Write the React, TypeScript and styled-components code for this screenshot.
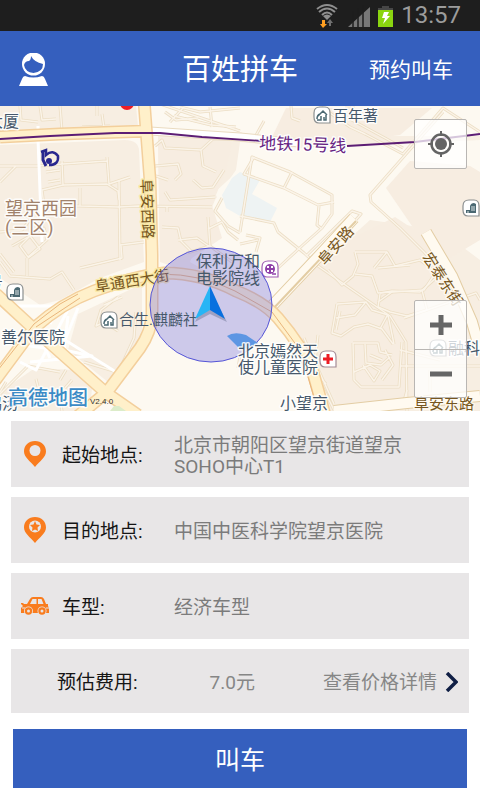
import React from "react";
import styled, { createGlobalStyle } from "styled-components";

const SANS = `Roboto, "Noto Sans CJK SC", sans-serif`;
const BLUE = "#355fbe";
const ORANGE = "#f97c1e";
const ROW_GREY = "#e8e6e7";

const GlobalStyle = createGlobalStyle`
  *, *::before, *::after { box-sizing: border-box; }
  body { margin: 0; background: #fff; font-family: ${SANS}; color: #151515; }
  button { font-family: inherit; border: 0; margin: 0; padding: 0; cursor: pointer; }
  svg { display: block; }
`;

const Page = styled.div`
  display: flex;
  flex-direction: column;
  min-height: 100vh;
`;

const StatusBar = styled.div`
  display: flex;
  align-items: center;
  justify-content: flex-end;
  height: 31px;
  padding-right: 19px;
  background: #1e1e1e;
  color: #9c9c9c;
`;

const StatusIcons = styled.div`
  display: flex;
  gap: 7px;
  margin-right: 7px;
`;

const Clock = styled.time`
  font-size: 24px;
  line-height: 31px;
`;

const Header = styled.header`
  display: grid;
  grid-template-columns: 1fr auto 1fr;
  align-items: center;
  height: 75px;
  padding: 2px 27px 0 19px;
  background: ${BLUE};
  color: #fff;
`;

const ProfileButton = styled.button`
  justify-self: start;
  background: none;
`;

const Title = styled.h1`
  margin: 0 0 0 8px;
  font-size: 29px;
  font-weight: 400;
  line-height: 40px;
`;

const BookLink = styled.a`
  justify-self: end;
  color: #fff;
  font-size: 21px;
  line-height: 32px;
  text-decoration: none;
`;

const MapPanel = styled.section`
  position: relative;
  overflow: hidden;
`;

const MapDrawing = styled.svg`
  width: 100%;
  height: auto;
`;

const LocateButton = styled.button`
  position: absolute;
  top: 13px;
  right: 13px;
  display: grid;
  place-items: center;
  width: 53px;
  height: 50px;
  border: 1px solid #b9b6b3;
  border-radius: 2px;
  background: rgba(255, 255, 255, 0.75);
`;

const ZoomControls = styled.div`
  position: absolute;
  right: 13px;
  bottom: 13px;
  display: flex;
  flex-direction: column;
  width: 53px;
  border: 1px solid #b9b6b3;
  border-radius: 2px;
  background: rgba(255, 255, 255, 0.75);
`;

const ZoomButton = styled.button`
  display: grid;
  place-items: center;
  height: 48px;
  background: none;
  & + & { border-top: 1px solid #b9b6b3; }
`;

const Order = styled.main`
  display: flex;
  flex-direction: column;
  gap: 10px;
  padding: 10px 11px 12px;
`;

const FieldRow = styled.button`
  display: grid;
  grid-template-columns: 28px 112px 1fr;
  align-items: center;
  min-height: 66px;
  padding: 0 60px 0 10px;
  background: ${ROW_GREY};
  text-align: left;
`;

const FieldIcon = styled.span`
  display: grid;
  place-items: center;
`;

const FieldLabel = styled.span`
  padding: 3px 0 0 13px;
  color: #151515;
  font-size: 19px;
  line-height: 21px;
`;

const FieldValue = styled(FieldLabel)`
  color: #7b7b7b;
`;

const FareRow = styled.div`
  display: flex;
  align-items: center;
  justify-content: space-between;
  min-height: 64px;
  padding: 2px 11px 0 46px;
  background: ${ROW_GREY};
  font-size: 19px;
  line-height: 21px;
`;

const FareLabel = styled.span`
  color: #151515;
`;

const FareAmount = styled.span`
  padding-left: 4px;
  color: #868686;
`;

const FareLink = styled.a`
  display: flex;
  align-items: center;
  gap: 8px;
  color: #868686;
  text-decoration: none;
`;

const CallButton = styled.button`
  height: 59px;
  margin: 6px 2px 0;
  padding-top: 4px;
  background: ${BLUE};
  color: #fff;
  font-size: 25px;
  line-height: 32px;
`;

const blocks = [
  "M0 106H136L138 126L0 131Z",
  "M0 145L125 140Q138 140 139 150L144 262L100 278L60 300L40 305L0 278Z",
  "M158 136H480V411H330L300 345L276 312L240 290L160 262Z",
  "M68 350L78 314L142 284V330Q140 345 120 372L108 382Z",
  "M0 392L35 368L75 370L92 388L90 411H0Z",
];

const openGround = [
  "M238 106L286 106L274 137L240 140Z",
  "M240 142L300 148L480 140V260L440 230L370 220L270 310L240 290L190 262L215 200L236 170Z",
  "M318 411L272 316L160 282L155 326L118 372L108 392L138 411Z",
  "M215 192L237 172L276 210L268 222L238 216L222 212Z",
];

const tintedBlocks = [
  "M286 108L272 137L350 142L400 135L432 108Z",
  "M386 188L410 161L470 166L480 172V240L450 258L412 226Z",
  "M285 313L318 255L395 217L430 240L460 300L470 392L340 406L318 360Z",
  "M158 138L232 142L226 170L212 205L222 238L186 262L160 262Z",
];

const whiteStreets = [
  "M38 126V139M38 139L42 242",
  "M12 315L42 325M16 306L70 306L36 370L20 362",
  "M68 316L64 350L92 356L30 362",
  "M78 308L65 340L116 372",
  "M50 324L60 306M22 345L60 350M36 331L50 358",
];

const lanes = [
  "M20 106L21 120L38 122M40 106L42 120L56 119M60 106L62 131M97 106V116M102 114L104 128M82 127L110 126",
  "M0 166H38L63 164L107 161M16 166L0 182M107 157L109 184L130 177M62 161L63 185L42 190M46 172L60 170M48 182L60 180",
  "M63 185L107 184L118 191L119 200M80 188V206L119 207M42 190L44 206L80 206M119 180L120 260",
  "M119 207L138 206L212 207M120 245L144 242M121 245L122 258L80 268",
  "M12 246L44 228L47 240L28 257L20 246L30 236L40 249L28 258",
  "M0 232L22 230L30 220M27 258V276M0 262L10 276L50 279L62 272L74 290M0 254L14 272",
  "M155 146L162 140L165 148L201 150L213 139H240M201 150L203 166L216 172M155 166L178 164L181 174L175 180M156 176L168 180",
  "M193 180L202 188L213 187L224 170M165 192L170 200L215 197M167 206V212M240 131L160 104M170 122L184 107",
  "M210 107L212 127M174 116L211 125L236 127M180 107L200 112L240 108M165 112L176 120L198 118",
  "M162 227L178 228L181 241L192 252M208 217L210 247L197 238L178 240M208 229L222 222L228 232L238 240M187 253L210 246L232 262",
  "M222 198L215 211L228 226L240 233",
  "M118 297L101 310L96 326L104 322L118 331M104 305L122 297M136 312L134 338L118 373M84 362L117 372",
  "M0 394L28 366L60 372M36 379L40 394M66 370L60 380M58 396L72 380M6 382L0 392M28 394L38 400M60 398L62 411",
  "M240 232L252 157L290 172L332 195V214L322 228L304 244L278 268",
  "M264 121L255 137L240 134M254 157L244 174L284 188L292 172M284 188L318 205L334 202M319 206L317 225L322 229",
  "M320 106L350 127L365 134L403 154L443 108L480 132M443 112L370 195L371 202L400 228L424 252L440 270L450 286",
  "M403 148L385 138L348 118",
  "M240 216L274 223L278 232L304 253L318 266L390 316L406 342L407 411M240 244L258 240M246 235L260 238L256 252",
  "M345 106L355 106M325 255L354 222L361 214L352 211L306 256M355 252L358 264L353 276L342 285L328 270M355 252L387 252L395 266L420 260L436 272L424 290L378 293L372 276L355 274",
  "M378 268L410 265M387 252L374 268M380 293L392 291L420 292L436 278M380 294L378 307L390 312L407 316L427 310L422 290M392 292L378 302",
  "M337 304L366 302L372 310L388 315L394 344M337 304L332 333L341 336L354 327L368 324L382 329L393 344M340 311L336 330M365 303L355 315L336 318M388 314L380 329",
  "M353 343H378L380 352L392 355M353 343L354 380L361 387H399L402 342M365 344L366 363L381 365L390 357M354 372L370 365L380 371L374 381L363 365M370 355L382 360M385 350L393 365L382 380",
  "M318 335L314 370L334 410M314 370L326 384M304 338L334 404M400 366H480M400 350L440 360M404 318L476 293L480 300M430 370L430 392",
  "M291 106L292 118L300 121M240 356L238 368M403 405L407 390",
];

const SIDE_ROADS = "M268 310L318 257L354 218M426 232L452 276L472 322L480 350M334 411L407 403L480 396";
const MAIN_ROADS =
  "M0 137L60 134L148 131M144 100L150 180L152 255V315Q151 332 140 348L107 392L78 416M-6 292L33 328L105 392L138 415M-6 382L34 328Q62 303 94 291Q135 276 164 273Q202 273 236 291Q264 302 278 318Q302 346 313 372L325 415";

type TagKind = "home" | "building" | "film" | "hospital";

const tagBorder: Record<TagKind, string> = {
  home: "#8b8f90",
  building: "#8b8f90",
  film: "#a05fb4",
  hospital: "#a48c96",
};

function PlaceTag({ x, y, kind }: { x: number; y: number; kind: TagKind }) {
  return (
    <g transform={`translate(${x} ${y})`}>
      <path
        d="M-2-8H3Q8-8 8-2V8H-3Q-8 8-8 2V-2Q-8-8-2-8Z"
        fill="#fff"
        stroke={tagBorder[kind]}
        strokeWidth="1.2"
      />
      {kind === "home" && (
        <path d="M-5 4Q-5 0-2-1M-4 1L1-4L5 0M-5 5H-1V1M4 0V5H2V2" fill="none" stroke="#4a6872" strokeWidth="1.5" />
      )}
      {kind === "building" && (
        <g>
          <path d="M-5 5V2H-1V-2Q0-5 3-5L5-4V5Z" fill="#4a6872" />
          <path d="M1-2V3M3-2V3M-4 4H-2" stroke="#dfe6e8" />
        </g>
      )}
      {kind === "film" && (
        <g>
          <circle r="5" fill="#8f3fa8" />
          <path d="M-3-2H-1M1-2H3M-3 2H-1M1 2H3" stroke="#fff" strokeWidth="2" />
          <path d="M2 5H6" stroke="#8f3fa8" strokeWidth="1.5" />
        </g>
      )}
      {kind === "hospital" && <path d="M0-5V5M-5 0H5" stroke="#ec1c24" strokeWidth="3" />}
    </g>
  );
}

const PoiText = styled.text<{ $bare?: boolean; $size?: number }>`
  font-family: ${SANS};
  font-size: ${(p) => p.$size ?? 16}px;
  fill: #46586b;
  stroke: #fff;
  stroke-width: 3px;
  stroke-opacity: ${(p) => (p.$bare ? 0 : 0.85)};
  stroke-linejoin: round;
  paint-order: stroke;
`;

const StreetText = styled(PoiText)<{ $plain?: boolean }>`
  font-size: 15px;
  fill: #765620;
  stroke: ${(p) => (p.$plain ? "#fffaf0" : "#f9e8a2")};
`;

const MetroText = styled(PoiText)`
  font-size: 17px;
  fill: #672483;
`;

const AreaText = styled(PoiText)`
  fill: #a1826c;
  font-size: 18px;
`;

const BrandText = styled(PoiText)`
  fill: #3b8bc6;
  font-size: 20px;
  font-weight: 500;
`;

function CityMap() {
  return (
    <MapDrawing viewBox="0 106 480 305" role="img" aria-label="望京地图">
      <rect y="106" width="480" height="305" fill="#fdf9f1" />
      {blocks.map((d) => <path key={d} d={d} fill="#f7eee2" />)}
      {openGround.map((d) => <path key={d} d={d} fill="#fdf9f1" />)}
      {tintedBlocks.map((d) => <path key={d} d={d} fill="#f7ede1" />)}
      <path d="M240 172L260 180L252 194L277 208L270 222L240 216L226 208L222 195L232 178Z" fill="#eef3f3" />
      <g fill="none" strokeLinejoin="round">
        {lanes.map((d) => <path key={d} d={d} stroke="#ecdec5" strokeWidth="3" />)}
        {lanes.map((d) => <path key={d} d={d} stroke="#fbf4e9" strokeWidth="1.4" />)}
        {whiteStreets.map((d) => <path key={d} d={d} stroke="#fff" strokeWidth="3" />)}
        <path d={SIDE_ROADS} stroke="#e3cda4" strokeWidth="12" />
        <path d={SIDE_ROADS} stroke="#fffaf0" strokeWidth="10" />
        <path d="M272 310L356 221" stroke="#e3cda4" strokeWidth="2" />
        <path d="M150 131L240 137L300 143" stroke="#eadbc0" strokeWidth="9" />
        <path d="M150 131L240 137L300 143" stroke="#fff" strokeWidth="7" />
        <path d={MAIN_ROADS} stroke="#f3cf9c" strokeWidth="13" />
        <path d={MAIN_ROADS} stroke="#fff0ca" strokeWidth="10" />
        <path d="M-2 370L34 324L60 304L78 294M36 327L80 298M160 274Q202 274 235 291L272 312L300 350L318 411" stroke="#eab67c" />
        <path d="M0 139L50 136L115 133H160L202 137L262 141M347 146L415 142L480 134" stroke="#5c1d74" strokeWidth="1.8" />
      </g>
      <path d="M110 411L114 406H119L126 411Z" fill="#dcecc9" />

      <circle cx="127" cy="103" r="7" fill="#ee1c25" />
      <path d="M41 152L46 150V155Q53 149 58 156Q59 165 49 165" fill="none" stroke="#29278e" strokeWidth="2.5" />
      <path d="M43 152V160L46 166" fill="none" stroke="#29278e" strokeWidth="3" />
      <circle cx="49" cy="161" r="3" fill="#29278e" />

      <PoiText x="-13" y="127">大厦</PoiText>
      <PlaceTag x={322} y={115} kind="home" />
      <PoiText x="333" y="121" $size={15}>百年著</PoiText>
      <AreaText x="5" y="215">望京西园</AreaText>
      <AreaText x="5" y="234">(三区)</AreaText>
      <StreetText transform="translate(141 179) rotate(88)">阜安西路</StreetText>
      <StreetText $plain transform="translate(325 266) rotate(-49)">阜安路</StreetText>
      <StreetText $plain transform="translate(422 257) rotate(57)">宏泰东街</StreetText>
      <StreetText transform="translate(96 292) rotate(-9)">阜通西大街</StreetText>
      <StreetText $plain x="414" y="409">阜安东路</StreetText>
      <MetroText transform="translate(259 149) rotate(2)">地铁15号线</MetroText>
      <PlaceTag x={471} y={208} kind="building" />
      <PlaceTag x={15} y={292} kind="building" />
      <PoiText x="-13" y="288">号</PoiText>
      <PoiText x="1" y="343">善尔医院</PoiText>
      <PlaceTag x={109} y={320} kind="home" />
      <PlaceTag x={270} y={269} kind="film" />
      <PlaceTag x={328} y={359} kind="hospital" />
      <PoiText x="280" y="409">小望京</PoiText>
      <PlaceTag x={438} y={348} kind="home" />
      <PoiText x="448" y="354">融科橄榄城</PoiText>

      <ellipse cx="211" cy="305" rx="61" ry="57" fill="#6a63dc" fillOpacity="0.32" stroke="#5555d7" />
      <path d="M227 336Q234 331 246 335L258 343L250 349L239 348Z" fill="#5d96e3" />
      <PoiText $bare $size={15} x="119" y="325">合生.麒麟社</PoiText>
      <PoiText $bare x="196" y="267">保利万和</PoiText>
      <PoiText $bare x="196" y="284">电影院线</PoiText>
      <PoiText x="238" y="357">北京嫣然天</PoiText>
      <PoiText x="238" y="373">使儿童医院</PoiText>
      <path d="M210 290L227 322L210 314L195 322Z" fill="#4b5579" opacity="0.35" />
      <path d="M210 286L195 319L210 310Z" fill="#27b5f5" />
      <path d="M210 286L225 319L210 310Z" fill="#0870df" />

      <PoiText x="-14" y="409">鸿汤</PoiText>
      <BrandText x="8" y="405">高德地图</BrandText>
      <text x="90" y="404" fontFamily="Liberation Sans, sans-serif" fontSize="8" fill="#333">V2.4.0</text>
    </MapDrawing>
  );
}

function SignalIcons() {
  return (
    <StatusIcons>
      <svg width="24" height="25" viewBox="0 0 24 25" aria-label="Wi-Fi">
        <g fill="none" stroke="#8f8f8f" strokeWidth="2">
          <path d="M2 6Q12-2 22 6M4 9Q12 2 20 9M7 12Q12 7 17 12" />
        </g>
        <path d="M8 13L12 17L16 13Q12 10 8 13Z" fill="#8f8f8f" />
        <path d="M7 17H10V21H12L8 25L5 21H7Z" fill="#ff9f21" />
        <path d="M14 23V20H12L15 16L18 20H16V23Z" fill="#707070" />
      </svg>
      <svg width="24" height="25" viewBox="0 0 24 25" aria-label="信号">
        <path d="M2 24L24 4V24Z" fill="#777" />
        <path d="M7 8V24M12 5V24M17 2V24" stroke="#1e1e1e" strokeWidth="1.5" />
      </svg>
      <svg width="17" height="25" viewBox="0 0 17 25" aria-label="正在充电">
        <path d="M5 3H12V5H16V8H1V5H5Z" fill="#474747" />
        <rect x="1" y="7" width="15" height="17" fill="#8bd510" />
        <path d="M7 9H12L10 13H13L6 21L8 15H5Z" fill="#fff" />
      </svg>
    </StatusIcons>
  );
}

const PIN = "M11 0C4.500 0 0 4.500 0 10.500C0 16 6 20 11 26C16 20 22 16 22 10.500C22 4.500 17.500 0 11 0Z";

function StartPin() {
  return (
    <svg width="22" height="26" viewBox="0 0 22 26" aria-hidden="true">
      <path d={PIN} fill={ORANGE} />
      <circle cx="11" cy="9.500" r="5.500" fill={ROW_GREY} />
    </svg>
  );
}

function TargetPin() {
  return (
    <svg width="22" height="26" viewBox="0 0 22 26" aria-hidden="true">
      <path d={PIN} fill={ORANGE} />
      <circle cx="11" cy="9.500" r="6" fill={ROW_GREY} />
      <path d="M11 4L12.500 7.500L16 8L13.500 10.500L14 14L11 12.500L8 14L8.500 10.500L6 8L9.500 7.500Z" fill={ORANGE} />
    </svg>
  );
}

function CarIcon() {
  return (
    <svg width="28" height="18" viewBox="0 0 28 18" aria-hidden="true">
      <path d="M0 6H2L3 7H6L9 2Q10 0 12 0H20Q22 0 23 2L25 7H27V9L28 11V16H0V11L2 9L0 7Z" fill={ORANGE} />
      <path d="M9 7L11.500 2H15.500V7ZM17 2H20.500L22.500 7H17Z" fill={ROW_GREY} />
      <path d="M1 11H4M25 11H28" stroke={ROW_GREY} />
      {[7.5, 21].map((x) => (
        <g key={x}>
          <circle cx={x} cy="14" r="4.500" fill={ROW_GREY} />
          <circle cx={x} cy="14" r="3.700" fill={ORANGE} />
          <circle cx={x} cy="14" r="1.500" fill={ROW_GREY} />
        </g>
      ))}
    </svg>
  );
}

const fields = [
  { label: "起始地点:", value: "北京市朝阳区望京街道望京SOHO中心T1", icon: <StartPin /> },
  { label: "目的地点:", value: "中国中医科学院望京医院", icon: <TargetPin /> },
  { label: "车型:", value: "经济车型", icon: <CarIcon /> },
];

export default function App() {
  return (
    <Page>
      <GlobalStyle />
      <StatusBar>
        <SignalIcons />
        <Clock>13:57</Clock>
      </StatusBar>
      <Header>
        <ProfileButton type="button" aria-label="个人中心">
          <svg width="29" height="34" viewBox="0 0 29 34">
            <path d="M6 23Q14 26 23 23Q25 23 26 26L29 33H0L3 26Q4 23 6 23Z" fill="#fff" />
            <circle cx="14.500" cy="11" r="11.500" fill="#fff" />
            <path d="M5 12Q6 8 10 8Q12 7 12 3Q15 9 24 11Q24 19 14.500 20Q6 19 5 12Z" fill={BLUE} />
          </svg>
        </ProfileButton>
        <Title>百姓拼车</Title>
        <BookLink href="#book">预约叫车</BookLink>
      </Header>
      <MapPanel>
        <CityMap />
        <LocateButton type="button" aria-label="定位">
          <svg width="28" height="28" viewBox="0 0 28 28">
            <circle cx="14" cy="14" r="9.500" fill="none" stroke="#646464" strokeWidth="2.500" />
            <circle cx="14" cy="14" r="6" fill="#646464" />
            <path d="M14 1V6M14 22V27M1 14H6M22 14H27" stroke="#646464" strokeWidth="2" />
          </svg>
        </LocateButton>
        <ZoomControls>
          <ZoomButton type="button" aria-label="放大">
            <svg width="22" height="22" viewBox="0 0 22 22"><path d="M11 1V21M0 11H22" stroke="#666" strokeWidth="5" /></svg>
          </ZoomButton>
          <ZoomButton type="button" aria-label="缩小">
            <svg width="22" height="22" viewBox="0 0 22 22"><path d="M0 11H22" stroke="#666" strokeWidth="5" /></svg>
          </ZoomButton>
        </ZoomControls>
      </MapPanel>
      <Order>
        {fields.map((field) => (
          <FieldRow type="button" key={field.label}>
            <FieldIcon>{field.icon}</FieldIcon>
            <FieldLabel>{field.label}</FieldLabel>
            <FieldValue>{field.value}</FieldValue>
          </FieldRow>
        ))}
        <FareRow>
          <FareLabel>预估费用:</FareLabel>
          <FareAmount>7.0元</FareAmount>
          <FareLink href="#fare">
            查看价格详情
            <svg width="13" height="20" viewBox="0 0 13 20" aria-hidden="true">
              <path d="M2 1L11 10L2 19" fill="none" stroke="#101f45" strokeWidth="3.500" />
            </svg>
          </FareLink>
        </FareRow>
        <CallButton type="button">叫车</CallButton>
      </Order>
    </Page>
  );
}
